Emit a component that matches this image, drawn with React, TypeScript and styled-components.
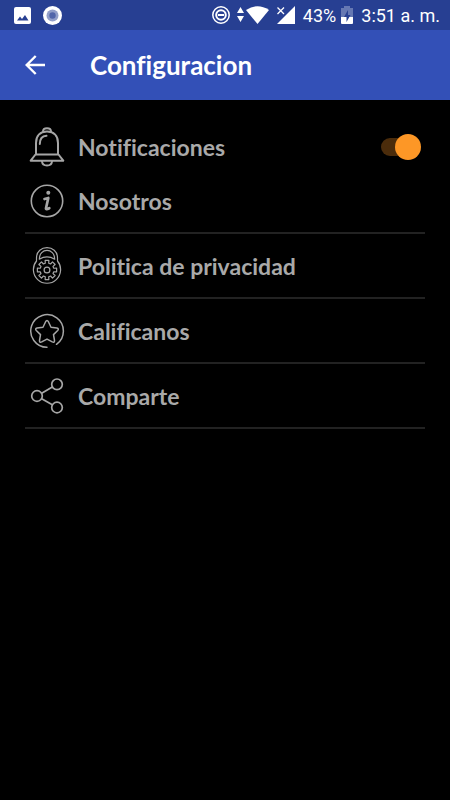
import React, { useState } from 'react';
import styled, { createGlobalStyle } from 'styled-components';

const GlobalStyle = createGlobalStyle`
  * { box-sizing: border-box; }
  body { margin: 0; background: #000; }
`;

const Page = styled.div`
  min-height: 100vh;
  background: #000;
  font-family: Lato, 'Open Sans', sans-serif;
  font-variant-ligatures: none;
`;

const StatusBar = styled.div`
  display: flex;
  align-items: center;
  justify-content: space-between;
  height: 30px;
  padding: 0 10px 0 14px;
  background: #273f92;
  color: #fff;
  font-family: Roboto, sans-serif;
  font-size: 18px;
  line-height: 20px;
`;

const StatusGroup = styled.div<{ $gap: number }>`
  display: flex;
  align-items: center;
  gap: ${(p) => p.$gap}px;
  white-space: nowrap;
`;

const StatusText = styled.span`
  padding-top: 2px;
`;

const Icon = styled.svg`
  display: block;
  flex: none;
`;

const AppBar = styled.header`
  display: flex;
  align-items: center;
  height: 70px;
  padding: 0 25px;
  gap: 45px;
  background: #3350b7;
  color: #fff;
`;

const BackButton = styled.button`
  display: flex;
  padding: 0;
  border: 0;
  background: none;
  color: inherit;
  cursor: pointer;
`;

const Title = styled.h1`
  margin: 0;
  font-size: 26px;
  font-weight: 700;
  line-height: 32px;
`;

const Settings = styled.main`
  padding: 25px;
  color: #a9a9a9;
  font-size: 23px;
  font-weight: 700;
  line-height: 28px;
`;

const SwitchRow = styled.label`
  display: flex;
  align-items: center;
  gap: 13px;
  height: 44px;
  padding-left: 4px;
  padding-right: 4px;
  cursor: pointer;
`;

const LinkRow = styled.a`
  display: flex;
  align-items: center;
  gap: 13px;
  height: 65px;
  padding-left: 4px;
  border-bottom: 2px solid #222;
  color: inherit;
  text-decoration: none;
`;

const Label = styled.span`
  flex: 1;
`;

const Toggle = styled.input`
  appearance: none;
  display: flex;
  align-items: center;
  width: 40px;
  height: 18px;
  margin: 0;
  border-radius: 9px;
  background: linear-gradient(#4b2c0b, #4b2c0b) left / 32px 18px no-repeat;
  cursor: pointer;

  &::before {
    content: '';
    width: 26px;
    height: 26px;
    flex: none;
    border-radius: 50%;
    background: #888;
  }

  &:checked::before {
    margin-left: auto;
    background: #fd9726;
  }
`;

const LineIcon = ({ width = 1.6, children }: { width?: number; children: React.ReactNode }) => (
  <Icon width="36" height="40" viewBox="0 0 36 40" fill="none" stroke="#a6a6a6" strokeWidth={width} strokeLinecap="round" strokeLinejoin="round" aria-hidden="true">
    {children}
  </Icon>
);

const gearPath = () => {
  const teeth = 8;
  const points: string[] = [];
  for (let i = 0; i < teeth; i += 1) {
    const middle = (i * 2 * Math.PI) / teeth;
    const corners: [number, number][] = [[-0.25, 7], [-0.19, 9.8], [0.19, 9.8], [0.25, 7]];
    corners.forEach(([offset, radius]) => {
      const angle = middle + offset;
      points.push(`${(18 + radius * Math.sin(angle)).toFixed(2)} ${(24 - radius * Math.cos(angle)).toFixed(2)}`);
    });
  }
  return `M${points.join('L')}Z`;
};

const Bell = () => (
  <LineIcon width={2}>
    <path d="M14 4.500C14 0 22 0 22 4.500" />
    <path d="M7 27V16C7 8.500 11.500 4.500 18 4.500S29 8.500 29 16V27" />
    <path d="M6.500 27.500H29.500L34.300 33.700H1.700Z" />
    <path d="M13 34.500C13.500 39.800 22.500 39.800 23 34.500" />
    <path d="M10.800 17C10.800 12 13.500 9 17.500 8.700" />
  </LineIcon>
);

const Info = () => (
  <LineIcon>
    <circle cx="18" cy="20" r="15.700" />
    <circle cx="19.300" cy="11.700" r="2" fill="#a6a6a6" stroke="none" />
    <path d="M15.500 18L19.300 17L17 27.300Q16.700 29 20.300 27.200" strokeWidth="2.700" />
  </LineIcon>
);

const Lock = () => (
  <LineIcon width={1.2}>
    <path d="M7.500 15V12C7.500-1.800 28.500-1.800 28.500 12V15A13.600 13.600 0 1 1 7.500 15" />
    <path d="M10.300 13.200C10.300 1.500 25.700 1.500 25.700 13.200Q18 8.500 10.300 13.200Z" />
    <path d={gearPath()} />
    <circle cx="18" cy="24" r="2.900" />
  </LineIcon>
);

const StarBadge = () => (
  <LineIcon width={1.5}>
    <path d="M18 36.300A16.300 16.300 0 1 1 27.500 33.300" />
    <path d="M16.600 10.700Q18 8.300 19.400 10.700L22 16.200L27.900 17Q30.300 17.600 28.700 19.500L24.500 23.600L25.500 29.500Q25.600 32 23.300 30.900L18 28.100L12.700 30.900Q10.400 32 10.500 29.500L11.500 23.600L7.300 19.500Q5.700 17.600 8.100 17L14 16.200Z" />
  </LineIcon>
);

const Share = () => (
  <LineIcon width={1.7}>
    <circle cx="8" cy="20" r="5.300" />
    <circle cx="28" cy="8.300" r="5.300" />
    <circle cx="28" cy="31.500" r="5.300" />
    <path d="M12.700 17.300L23.300 11M12.700 22.700L23.300 28.800" />
  </LineIcon>
);

const links = [
  { label: 'Nosotros', href: '#nosotros', Glyph: Info },
  { label: 'Politica de privacidad', href: '#privacidad', Glyph: Lock },
  { label: 'Calificanos', href: '#calificanos', Glyph: StarBadge },
  { label: 'Comparte', href: '#comparte', Glyph: Share },
];

export default function App() {
  const [notify, setNotify] = useState(true);

  return (
    <Page>
      <GlobalStyle />
      <StatusBar>
        <StatusGroup $gap={12}>
          <Icon width="17" height="17" viewBox="0 0 17 17" aria-hidden="true">
            <rect width="17" height="17" rx="2" fill="#fff" />
            <path d="M3 13.500L6 9.500L8 12L11 8L14.500 13.500Z" fill="#273f92" />
          </Icon>
          <Icon width="19" height="19" viewBox="0 0 19 19" aria-hidden="true">
            <circle cx="9.500" cy="9.500" r="9.500" fill="#fff" />
            <circle cx="9.500" cy="9.500" r="6" fill="#929fc9" />
            <circle cx="9.500" cy="9.500" r="3.200" fill="#5266aa" />
          </Icon>
        </StatusGroup>
        <StatusGroup $gap={8}>
          <StatusGroup $gap={7}>
            <Icon width="18" height="18" viewBox="0 0 18 18" fill="none" stroke="#fff" aria-hidden="true">
              <circle cx="9" cy="9" r="8.200" strokeWidth="1.500" />
              <circle cx="9" cy="9" r="4.800" strokeWidth="2" />
              <path d="M6 9H12" strokeWidth="2" />
            </Icon>
            <Icon width="32" height="18" viewBox="0 0 32 18" fill="#fff" aria-hidden="true">
              <path d="M0 7L3.500 1L7 7ZM0 10H7L3.500 16Z" />
              <path d="M9 4Q20.500-3.500 32 4L20.500 18Z" />
            </Icon>
            <Icon width="19" height="18" viewBox="0 0 19 18" fill="#fff" aria-hidden="true">
              <path d="M19 0V18H1Z" />
              <path d="M0 0H10V9H0Z" fill="#273f92" />
              <path d="M1.500 1.500L8 8M8 1.500L1.500 8" stroke="#fff" strokeWidth="1.300" />
            </Icon>
          </StatusGroup>
          <StatusGroup $gap={5}>
            <StatusText>43%</StatusText>
            <Icon width="12" height="18" viewBox="0 0 12 18" aria-hidden="true">
              <path d="M3 2V0H9V2H12V11H0V2Z" fill="#6678b3" />
              <path d="M0 11H12V17Q12 18 11 18H1Q0 18 0 17Z" fill="#fff" />
              <path d="M7 4L3 11H5.500V16L9.500 9H7Z" fill="#273f92" />
            </Icon>
          </StatusGroup>
          <StatusText>3:51 a. m.</StatusText>
        </StatusGroup>
      </StatusBar>
      <AppBar>
        <BackButton type="button" aria-label="Volver">
          <Icon width="20" height="20" viewBox="0 0 20 20" fill="none" stroke="#fff" strokeWidth="2.400" aria-hidden="true">
            <path d="M20 10H2M10.700 1L1.700 10L10.700 19" />
          </Icon>
        </BackButton>
        <Title>Configuracion</Title>
      </AppBar>
      <Settings>
        <SwitchRow>
          <Bell />
          <Label>Notificaciones</Label>
          <Toggle type="checkbox" role="switch" checked={notify} onChange={(e) => setNotify(e.target.checked)} />
        </SwitchRow>
        {links.map(({ label, href, Glyph }) => (
          <LinkRow key={label} href={href}>
            <Glyph />
            <Label>{label}</Label>
          </LinkRow>
        ))}
      </Settings>
    </Page>
  );
}
